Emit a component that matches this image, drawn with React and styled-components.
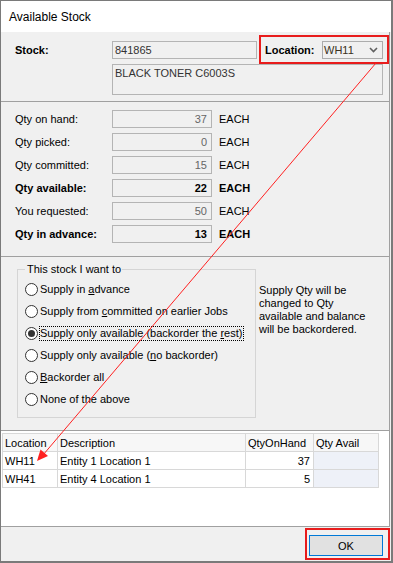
import React from 'react'
import styled, { createGlobalStyle, css } from 'styled-components'

const GlobalStyle = createGlobalStyle`
	* { box-sizing: border-box; }
	body {
		margin: 0;
		font-family: 'Liberation Sans', Arial, sans-serif;
		font-size: 11px;
		color: #000;
		background: #fff;
	}
`

const Window = styled.div`
	position: relative;
	width: 393px;
	height: 563px;
	display: flex;
	flex-direction: column;
	border: 1px solid #7a7a7a;
	border-right-width: 2px;
	border-bottom-width: 2px;
	background: #f0f0f0;
	overflow: hidden;
`
const TitleBar = styled.div`
	height: 31px;
	flex: none;
	display: flex;
	align-items: center;
	padding-left: 8px;
	background: #fff;
	font-size: 12px;
`
const Section = styled.div`
	flex: none;
	height: ${(p) => p.$h}px;
	margin-right: 1px;
	border-right: 1px solid #a0a0a0;
	border-bottom: 1px solid #a0a0a0;
	padding: ${(p) => p.$pad || '0'};
`
const Row = styled.div`
	display: flex;
	align-items: center;
	height: ${(p) => p.$h || 18}px;
	margin-bottom: ${(p) => p.$gap || 0}px;
`
const Label = styled.div`
	width: 97px;
	padding-left: 14px;
	box-sizing: content-box;
	flex: none;
	font-weight: ${(p) => (p.$bold ? 700 : 400)};
	white-space: nowrap;
`
const TextBox = styled.div`
	width: ${(p) => p.$w}px;
	height: ${(p) => p.$h || 18}px;
	flex: none;
	border: 1px solid #b4b4b4;
	background: #f0f0f0;
	color: ${(p) => (p.$dark ? '#333' : '#666')};
	padding: ${(p) => (p.$right ? '2px 4px 0 0' : '2px 0 0 2px')};
	text-align: ${(p) => (p.$right ? 'right' : 'left')};
	font-weight: ${(p) => (p.$bold ? 700 : 400)};
	${(p) => p.$bold && css`color: #000;`}
	white-space: nowrap;
`
const Unit = styled.span`
	margin-left: 7px;
	font-weight: ${(p) => (p.$bold ? 700 : 400)};
`
const Highlight = styled.div`
	border: 2px solid #e81c1c;
	display: flex;
	align-items: center;
	flex: none;
`
const LocationBox = styled(Highlight)`
	width: 130px;
	height: 29px;
	margin-left: 2px;
	padding-left: 4px;
	b { width: 57px; }
`
const Combo = styled.div`
	width: 61px;
	height: 18px;
	border: 1px solid #acacac;
	background: #f0f0f0;
	display: flex;
	align-items: center;
	justify-content: space-between;
	padding: 0 4px 0 1px;
	color: #3a3020;
`
const Description = styled(TextBox)`
	margin-left: 111px;
`
const Bottom = styled.div`
	display: flex;
	align-items: flex-start;
`
const Group = styled.fieldset`
	margin: 6px 0 0 16px;
	width: 239px;
	height: 155px;
	border: 1px solid #d5d5d5;
	padding: 2px 0 0 7px;
	legend {
		padding: 0 1px 0 2px;
		line-height: 13px;
	}
`
const Option = styled.div`
	display: flex;
	align-items: center;
	height: 22px;
`
const RadioDot = styled.span`
	width: 13px;
	height: 13px;
	flex: none;
	border-radius: 50%;
	border: 1px solid #333;
	background: #fff;
	display: inline-flex;
	align-items: center;
	justify-content: center;
	margin-right: 1px;
	${(p) =>
		p.$checked &&
		css`
			&::after {
				content: '';
				width: 7px;
				height: 7px;
				border-radius: 50%;
				background: #333;
			}
		`}
`
const OptionText = styled.span`
	padding: 0 1px 0 0;
	line-height: 13px;
	border: 1px dotted ${(p) => (p.$focus ? '#000' : 'transparent')};
	white-space: nowrap;
`
const Help = styled.div`
	width: 110px;
	margin: 27px 0 0 3px;
	line-height: 13px;
`
const GridArea = styled.div`
	flex: none;
	height: 96px;
	margin-right: 1px;
	border-right: 1px solid #a0a0a0;
	border-bottom: 1px solid #a0a0a0;
	background: #fff;
	padding: 2px 0 0 1px;
`
const Table = styled.table`
	border-collapse: collapse;
	table-layout: fixed;
	width: 376px;
	border-left: 1px solid #a8a8a8;
	td, th {
		height: 18px;
		padding: 0 3px 0 2px;
		border: 1px solid #d8d8d8;
		font-weight: 400;
		text-align: left;
		white-space: nowrap;
	}
	th { background: #f7f7f7; }
`
const Cell = styled.td`
	text-align: ${(p) => (p.$num ? 'right' : 'left')} !important;
	background: ${(p) => (p.$avail ? '#eef1f8' : '#fff')};
`
const Footer = styled.div`
	flex: 1;
	display: flex;
	justify-content: flex-end;
	align-items: flex-start;
	padding: 1px 1px 0 0;
`
const OkBox = styled(Highlight)`
	width: 85px;
	height: 32px;
	padding: 3px 1px 0 2px;
`
const Button = styled.button`
	width: 74px;
	height: 21px;
	border: 1px solid #0078d7;
	background: #e1e1e1;
	font: inherit;
	color: #000;
	padding: 0;
`
const Overlay = styled.svg`
	position: absolute;
	left: -1px;
	top: -1px;
	pointer-events: none;
`

const qtyRows = [
	['Qty on hand:', '37'],
	['Qty picked:', '0'],
	['Qty committed:', '15'],
	['Qty available:', '22', true],
	['You requested:', '50'],
	['Qty in advance:', '13', true],
]

const options = [
	<>Supply in <u>a</u>dvance</>,
	<>Supply from <u>c</u>ommitted on earlier Jobs</>,
	<>Supply only available (backorder the <u>r</u>est)</>,
	<>Supply only available (<u>n</u>o backorder)</>,
	<><u>B</u>ackorder all</>,
	<>None of the above</>,
]

const stock = [
	['WH11', 'Entity 1 Location 1', '37'],
	['WH41', 'Entity 4 Location 1', '5'],
]

const App = () => {
	return (
		<>
			<GlobalStyle />
			<Window>
				<TitleBar>Available Stock</TitleBar>
				<Section $h={70} $pad='3px 0 0 0'>
					<Row $h={29}>
						<Label $bold>Stock:</Label>
						<TextBox $w={145} $dark>841865</TextBox>
						<LocationBox>
							<b>Location:</b>
							<Combo>
								<span>WH11</span>
								<svg width='9' height='6' viewBox='0 0 9 6'>
									<polyline points='1,1 4.5,4.5 8,1' fill='none' stroke='#606060' strokeWidth='1.6' />
								</svg>
							</Combo>
						</LocationBox>
					</Row>
					<Description $w={271} $h={31} $dark>BLACK TONER C6003S</Description>
				</Section>
				<Section $h={155} $pad='8px 0 0 0'>
					{qtyRows.map(([label, value, bold]) => (
						<Row key={label} $gap={5}>
							<Label $bold={bold}>{label}</Label>
							<TextBox $w={100} $right $bold={bold}>{value}</TextBox>
							<Unit $bold={bold}>EACH</Unit>
						</Row>
					))}
				</Section>
				<Section $h={174}>
					<Bottom>
						<Group>
							<legend>This stock I want to</legend>
							{options.map((text, i) => (
								<Option key={i}>
									<RadioDot $checked={i === 2} />
									<OptionText $focus={i === 2}>{text}</OptionText>
								</Option>
							))}
						</Group>
						<Help>Supply Qty will be changed to Qty available and balance will be backordered.</Help>
					</Bottom>
				</Section>
				<GridArea>
					<Table>
						<colgroup>
							<col style={{ width: 55 }} />
							<col style={{ width: 188 }} />
							<col style={{ width: 68 }} />
							<col style={{ width: 65 }} />
						</colgroup>
						<thead>
							<tr>
								<th>Location</th>
								<th>Description</th>
								<th>QtyOnHand</th>
								<th>Qty Avail</th>
							</tr>
						</thead>
						<tbody>
							{stock.map(([loc, desc, qty]) => (
								<tr key={loc}>
									<Cell>{loc}</Cell>
									<Cell>{desc}</Cell>
									<Cell $num>{qty}</Cell>
									<Cell $avail />
								</tr>
							))}
						</tbody>
					</Table>
				</GridArea>
				<Footer>
					<OkBox>
						<Button>OK</Button>
					</OkBox>
				</Footer>
				<Overlay width='393' height='563' viewBox='0 0 393 563'>
					<line x1='376' y1='63' x2='43' y2='455' stroke='#ff2020' strokeWidth='1' />
					<polygon points='37,461 40.5,449.5 48,456' fill='#ff2020' />
				</Overlay>
			</Window>
		</>
	)
}

export default App
